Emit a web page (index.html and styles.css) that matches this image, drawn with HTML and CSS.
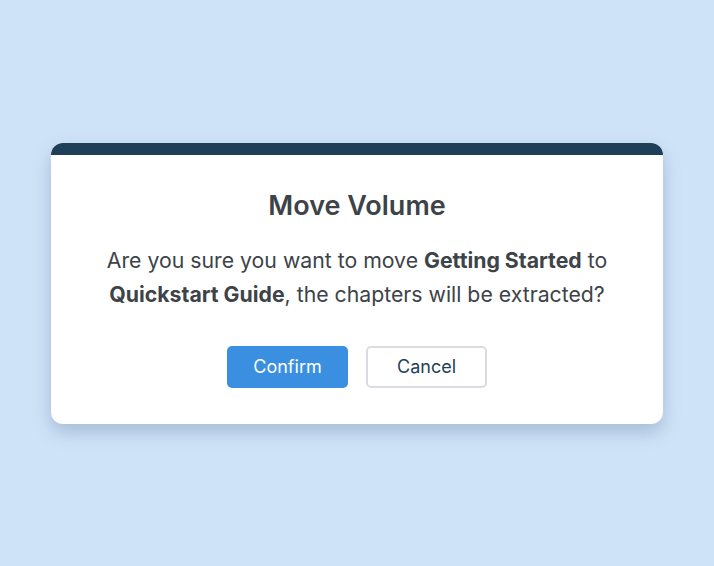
FILE: index.html
```html
<!DOCTYPE html>
<html lang="en">
<head>
    <meta charset="UTF-8">
    <meta name="viewport" content="width=device-width, initial-scale=1.0">
    <title>Move Volume</title>
    <link rel="stylesheet" href="styles.css">
</head>
<body>
    <div class="modal">
        <div class="modal-bar"></div>
        <div class="modal-body">
            <h1 class="modal-title">Move Volume</h1>
            <p class="modal-text">
                Are you sure you want to move <b>Getting Started</b> to
                <b>Quickstart Guide</b>, the chapters will be extracted?
            </p>
            <div class="modal-actions">
                <button class="btn btn-primary">Confirm</button>
                <button class="btn btn-secondary">Cancel</button>
            </div>
        </div>
    </div>
</body>
</html>
```

FILE: styles.css
```css
html, body {
    height: 100%;
}
body {
    margin: 0;
    font-family: Inter, "Noto Sans", sans-serif;
    background-color: #cfe3f8;
    display: flex;
    align-items: center;
    justify-content: center;
}
.modal {
    width: 612px;
    background: #fff;
    border-radius: 12px;
    overflow: hidden;
    box-shadow: 0 8px 18px rgba(60, 90, 130, 0.28);
}
.modal-bar {
    height: 12px;
    background-color: #1d3f58;
}
.modal-body {
    padding: 35px 30px 36px;
    text-align: center;
}
.modal-title {
    margin: 0 0 21px;
    font-size: 27px;
    line-height: 32px;
    font-weight: 600;
    color: #3d4348;
}
.modal-text {
    margin: 0 0 35px;
    font-size: 21.25px;
    line-height: 34px;
    color: #3d4348;
}
.modal-text b {
    font-weight: 700;
}
.modal-actions {
    display: flex;
    justify-content: center;
    gap: 18px;
}
.btn {
    width: 121px;
    height: 42px;
    font-family: inherit;
    font-size: 18px;
    border-radius: 5px;
    cursor: pointer;
}
.btn-primary {
    background-color: #3b8fe0;
    color: #fff;
    border: none;
}
.btn-secondary {
    background-color: #fff;
    color: #1d3f58;
    border: 2px solid #d9dde1;
}
```
